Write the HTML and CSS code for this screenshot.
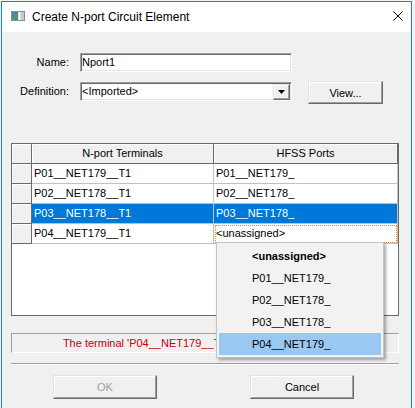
FILE: index.html
```html
<!DOCTYPE html>
<html lang="en">

<head>
    <meta charset="UTF-8">
    <meta name="viewport" content="width=device-width, initial-scale=1.0">
    <title>Create N-port Circuit Element</title>
    <link rel="stylesheet" href="styles.css">
</head>

<body>
    <div class="window">
        <div class="titlebar">
            <svg class="app-icon" width="14" height="10" viewBox="0 0 14 10">
                <defs>
                    <linearGradient id="pane" x1="0" y1="0" x2="0" y2="1">
                        <stop offset="0" stop-color="#4a86a8" />
                        <stop offset="1" stop-color="#4f9a6c" />
                    </linearGradient>
                </defs>
                <rect x="0.5" y="0.5" width="13" height="9" fill="#e6e6e6" stroke="#8c8c8c" />
                <rect x="1" y="1" width="6" height="8" fill="url(#pane)" />
                <rect x="8" y="1" width="1" height="8" fill="#fff" />
                <rect x="10" y="1" width="3" height="8" fill="#c9c9c9" />
            </svg>
            <span class="caption">Create N-port Circuit Element</span>
            <svg class="close" width="10" height="10" viewBox="0 0 10 10">
                <path d="M0.5 0.5 L9.5 9.5 M9.5 0.5 L0.5 9.5" stroke="#000" stroke-width="1" fill="none" />
            </svg>
        </div>

        <div class="dialog">
            <div class="fields">
                <label class="field-label">Name:</label>
                <div class="edit">Nport1</div>
                <span></span>

                <label class="field-label">Definition:</label>
                <div class="edit combo">&lt;Imported&gt;<span class="drop"></span></div>
                <button class="btn view">View...</button>
            </div>

            <div class="grid-wrap">
                <div class="grid">
                    <div class="head"></div>
                    <div class="head">N-port Terminals</div>
                    <div class="head">HFSS Ports</div>

                    <div class="head"></div>
                    <div class="cell">P01__NET179__T1</div>
                    <div class="cell">P01__NET179_</div>

                    <div class="head"></div>
                    <div class="cell">P02__NET178__T1</div>
                    <div class="cell">P02__NET178_</div>

                    <div class="head"></div>
                    <div class="cell selected">P03__NET178__T1</div>
                    <div class="cell selected">P03__NET178_</div>

                    <div class="head"></div>
                    <div class="cell">P04__NET179__T1</div>
                    <div class="cell editing">&lt;unassigned&gt;</div>
                </div>

                <!-- open list of the port being edited -->
                <ul class="dropdown">
                    <li class="none">&lt;unassigned&gt;</li>
                    <li>P01__NET179_</li>
                    <li>P02__NET178_</li>
                    <li>P03__NET178_</li>
                    <li class="hot">P04__NET179_</li>
                </ul>
            </div>

            <div class="status">The terminal 'P04__NET179__T1' is not mapped to a port.</div>

            <hr class="sep">

            <div class="actions">
                <button class="btn" disabled>OK</button>
                <button class="btn">Cancel</button>
            </div>
        </div>
    </div>
</body>

</html>
```

FILE: styles.css
```css
html,
body {
    height: 408px;
    overflow: hidden;
}

body {
    background-color: #f3f3f3;
    margin: 0;
    padding: 0;
    font-family: "Liberation Sans", Arial, sans-serif;
    font-size: 11px;
    color: #000;
}

.window {
    box-sizing: border-box;
    width: 411px;
    height: 407px;
    margin: 1px 0 0 1px;
    border: 1px solid #1a7fd4;
    border-bottom: 0;
    background-color: #f0f0f0;
}

/* title bar */

.titlebar {
    display: flex;
    align-items: center;
    height: 30px;
    padding-left: 9px;
    background-color: #fff;
}

.app-icon {
    margin-bottom: 2px;
}

.caption {
    margin-left: 7px;
    font-size: 12px;
}

.close {
    margin-left: auto;
    margin-right: 8px;
    margin-bottom: 2px;
}

/* dialog body */

.dialog {
    padding: 21px 12px 0 9px;
}

.fields {
    display: grid;
    grid-template-columns: 58px 212px 75px;
    grid-template-rows: 19px 22px;
    column-gap: 11px;
    row-gap: 9px;
    align-items: start;
}

.field-label {
    text-align: right;
    line-height: 19px;
}

.fields .field-label:nth-of-type(2),
.combo {
    margin-top: 1px;
}

.edit {
    position: relative;
    box-sizing: border-box;
    height: 19px;
    padding-left: 1px;
    line-height: 17px;
    background-color: #fff;
    border: 1px solid;
    border-color: #a0a0a0 #fff #fff #a0a0a0;
    box-shadow: inset 1px 1px 0 #696969, inset -1px -1px 0 #e3e3e3;
}

.drop {
    position: absolute;
    top: 1px;
    right: 1px;
    box-sizing: border-box;
    width: 17px;
    height: 16px;
    background-color: #f0f0f0;
    border: 1px solid;
    border-color: #e3e3e3 #696969 #696969 #e3e3e3;
    box-shadow: inset -1px -1px 0 #a0a0a0, inset 1px 1px 0 #fff;
}

.drop::after {
    content: "";
    position: absolute;
    left: 4px;
    top: 5px;
    width: 7px;
    height: 4px;
    background-color: #000;
    clip-path: polygon(0 0, 100% 0, 50% 100%);
}

.btn {
    box-sizing: border-box;
    height: 24px;
    padding: 0;
    background-color: #f0f0f0;
    font-family: "Liberation Sans", Arial, sans-serif;
    font-size: 11px;
    color: #000;
    border: 1px solid;
    border-color: #e3e3e3 #696969 #696969 #e3e3e3;
    box-shadow: inset -1px -1px 0 #a0a0a0, inset 1px 1px 0 #fff;
}

.btn:disabled {
    color: #a0a0a0;
}

.view {
    width: 75px;
    height: 23px;
    margin-left: 5px;
}

/* terminal / port table */

.grid-wrap {
    position: relative;
    box-sizing: border-box;
    width: 388px;
    height: 173px;
    margin-top: 40px;
    background-color: #fff;
    border: 1px solid #696969;
}

.grid {
    display: grid;
    grid-template-columns: 20px 182px 184px;
    grid-auto-rows: 20px;
}

.grid>div {
    box-sizing: border-box;
    line-height: 19px;
    white-space: nowrap;
    overflow: hidden;
}

.head {
    background-color: #f0f0f0;
    text-align: center;
    border-right: 1px solid #696969;
    border-bottom: 1px solid #696969;
    box-shadow: inset 1px 1px 0 #fff;
}

.cell {
    padding-left: 2px;
    border-right: 1px solid #c0c0c0;
    border-bottom: 1px solid #c0c0c0;
}

.cell.selected {
    background-color: #0078d7;
    color: #fff;
}

.cell.editing {
    outline: 1px dotted #f0862c;
    outline-offset: -2px;
}

.dropdown {
    position: absolute;
    left: 204px;
    top: 98px;
    z-index: 1;
    box-sizing: border-box;
    width: 168px;
    height: 116px;
    margin: 0;
    padding: 2px;
    list-style-type: none;
    background-color: #f2f2f2;
    border: 1px solid #c4c4c4;
    box-shadow: 2px 2px 3px rgba(0, 0, 0, 0.35);
    font-size: 11px;
}

.dropdown li {
    height: 22px;
    line-height: 22px;
    padding-left: 33px;
}

.dropdown .none {
    font-weight: bold;
}

.dropdown .hot {
    background-color: #99c9f2;
}

/* message line and buttons */

.status {
    box-sizing: border-box;
    width: 388px;
    height: 20px;
    margin-top: 17px;
    line-height: 18px;
    text-align: center;
    color: #c80000;
    border: 1px solid;
    border-color: #a0a0a0 #fff #fff #a0a0a0;
    white-space: nowrap;
    overflow: hidden;
}

.sep {
    width: 388px;
    height: 0;
    margin: 10px 0 0 0;
    border: 0;
    border-top: 1px solid #a0a0a0;
    border-bottom: 1px solid #fff;
}

.actions {
    display: flex;
    gap: 93px;
    margin-top: 10px;
    padding-left: 42px;
}

.actions .btn {
    width: 104px;
}
```
